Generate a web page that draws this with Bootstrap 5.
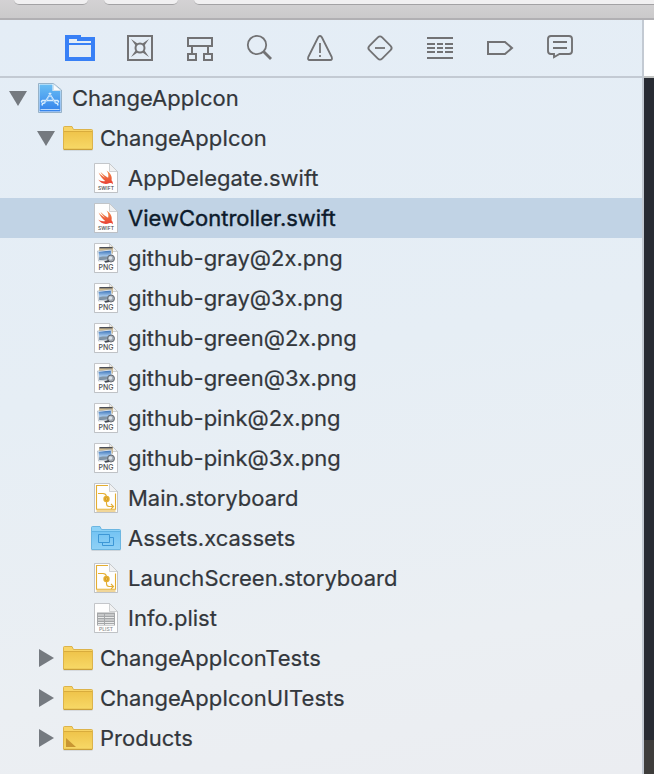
<!DOCTYPE html>
<html lang="en">
<head>
<meta charset="utf-8">
<meta name="viewport" content="width=device-width, initial-scale=1">
<title>ChangeAppIcon</title>
<link rel="stylesheet" href="https://cdn.jsdelivr.net/npm/bootstrap@5.3.0/dist/css/bootstrap.min.css">
<style>
body { font-family: Inter, "Liberation Sans", sans-serif; color: #33373c; }
.titlebar { height: 20px; padding: 0 0 0 14px; gap: 16px; background: linear-gradient(#d4d2d4, #cbcacb); border-bottom: 2px solid #b1b0b3; }
.title-btn { width: 74px; height: 5px; padding: 0; background: #f1f0f1; border: 0; border-bottom: 1px solid #a3a2a4; border-radius: 0 0 8px 8px; }
.title-status { height: 5px; background: #f1f0f1; border-bottom: 1px solid #a3a2a4; border-radius: 0 0 0 8px; }
.navigator { background: linear-gradient(170deg, #e4edf6 0%, #e6eef5 45%, #ebeff3 80%, #ebedf1 100%); border-right: 2px solid #c3cad3; }
.nav-tools { height: 58px; padding-right: 2px; border-bottom: 2px solid #c3cad3; }
.tool { width: 60px; height: 40px; padding: 0; border: 0; background: none; color: #727274; }
.tool.current { color: #3880f6; }
.glyph { width: 30px; height: 30px; display: block; flex: none; }
.outline-row { height: 40px; padding-left: 9px; font-size: 22px; line-height: 28px; white-space: nowrap; }
.level-1 { padding-left: 37px; }
.level-2 { padding-left: 91px; }
.row-name { margin-left: 7px; -webkit-text-stroke: 0.2px currentColor; }
.outline-row.selected { background: #c1d3e5; color: #0d1b2c; }
.selected .row-name { -webkit-text-stroke-width: 0.4px; }
.twist { width: 18px; height: 18px; margin-right: 8px; padding: 0; border: 0; background: none; display: flex; color: #757a80; }
.twist svg { width: 18px; height: 18px; }
.editor { width: 10px; background: #282b33; }
.jumpbar { height: 58px; background: #fff; border-bottom: 2px solid #c2c4c3; }
.debugbar { height: 34px; background: #3e3d3b; }
.kind { font: 500 5px Inter, "Liberation Sans", sans-serif; text-anchor: middle; fill: #4b4d50; }
.kind-png { font-size: 7px; }
.kind-plist { fill: #8a8c8e; }
</style>
<script src="https://cdn.jsdelivr.net/npm/bootstrap@5.3.0/dist/js/bootstrap.bundle.min.js"></script>
</head>
<body>
<svg width="0" height="0" class="position-absolute" aria-hidden="true">
  <defs>
    <linearGradient id="gold" x2="0" y2="1"><stop stop-color="#efc44b"/><stop offset="1" stop-color="#f7d866"/></linearGradient>
    <linearGradient id="sky" x2="0" y2="1"><stop stop-color="#75c4f3"/><stop offset="1" stop-color="#8dd0f6"/></linearGradient>
    <linearGradient id="blue" x2="0" y2="1"><stop stop-color="#69bef4"/><stop offset="1" stop-color="#3483ec"/></linearGradient>
    <linearGradient id="bird" x2="0" y2="1"><stop stop-color="#f29045"/><stop offset="1" stop-color="#e83d35"/></linearGradient>
    <linearGradient id="photo" x2="0" y2="1"><stop stop-color="#3b73b8"/><stop offset=".6" stop-color="#a9cbee"/><stop offset="1" stop-color="#415f83"/></linearGradient>
  </defs>
  <symbol id="page" viewBox="0 0 30 30">
    <path d="M3.500 1h15l8 8v21h-23z" fill="#8b9097" opacity=".45"/>
    <path d="M3.500.5h15l8 8v21h-23z" fill="#fefefe" stroke="#b7babe" stroke-width=".8"/>
    <path d="M18.500.5v8h8z" fill="#f0f1f2" stroke="#bfc1c4" stroke-width=".7"/>
  </symbol>
  <symbol id="swift" viewBox="0 0 30 30">
    <use href="#page"/>
    <path transform="translate(0 -2)" d="M7.500 11.500c2.500 2.500 4.500 4 6.500 5.300-1.800-1.900-3.500-4-4.500-5.800 2.500 2.300 5 4.200 7.600 5.800.7-2.500.3-4.900-1.600-7.300 4 2.400 6 6.200 5 9.800 1.300 1.500 1.700 3 1.200 4-1.100-1.700-2.400-1.500-3.700-1-4.300 1.600-8.500-.2-10.800-3.700 2.200 1.400 4.800 2.200 7 1.300-2.800-2.100-5-5-6.700-8.400z" fill="url(#bird)"/>
  </symbol>
  <symbol id="png" viewBox="0 0 30 30">
    <use href="#page"/>
    <path d="M8 4.500l14-1v7H8z" fill="#d2bd91"/>
    <path d="M8.500 4h13v1.400h-13z" fill="#4a4e58"/>
    <path d="M6.500 8l14-1.500 1 10.500-14 1z" fill="#fff" stroke="#8b98a7" stroke-width=".5"/>
    <path d="M7.500 8.800l12.300-1.200.9 8.500-12.300.8z" fill="url(#photo)"/>
    <path d="M8.300 14.500c4-2 7 0 11-1.500l1 3-12 .7z" fill="#8295a6"/>
    <circle cx="20" cy="15.500" r="3.500" fill="#a2a9b1" stroke="#5b626b" stroke-width=".9"/>
    <circle cx="19.500" cy="15" r="1.800" fill="#dbe3ea"/>
    <path d="M13 18.500l4.500-1.500 1 2-4 .7z" fill="#43484f"/>
  </symbol>
  <symbol id="story" viewBox="0 0 30 30">
    <use href="#page"/>
    <path d="M17 2.500H5.500v23.700h19V10.500M5.500 28h19" fill="none" stroke="#e4ae32" stroke-width="1.100"/>
    <path d="M7 10.500h5q3 0 3.500 3v7q0 3 2.500 3h4.500M20 21l2.500 2.500L20 26" fill="none" stroke="#e4ae32" stroke-width="1.100"/>
    <circle cx="15.500" cy="16" r="3.200" fill="#e4ae32"/><circle cx="15.500" cy="16" r="1.300" fill="#f0c45a" stroke="#c58c14" stroke-width=".6"/>
  </symbol>
  <symbol id="plist" viewBox="0 0 30 30">
    <use href="#page"/>
    <path d="M6 9.500h18v13H6z" fill="#a5a7a9"/>
    <path d="M7 12h6M14 12h9M7 14.500h6M14 14.500h9M7 17h6M14 17h9M7 19.500h6M14 19.500h9M7 21.500h6M14 21.500h9" stroke="#e9eaea" stroke-width="1"/>
  </symbol>
  <symbol id="folder" viewBox="0 0 30 30">
    <path d="M.5 26.500h29v1H.5z" fill="#77777a" opacity=".35"/>
    <path d="M.5 26V4.500q0-1 1-1H9l1.500 3h18q1 0 1 1V26q0 .5-.5.500H1q-.5 0-.5-.5z" fill="#f8d466" stroke="#d9ae3f" stroke-width=".9"/>
    <path d="M1 9h28v16.500H1z" fill="url(#gold)"/><path d="M1 8.500h28" stroke="#d9ac3c"/><path d="M1 26.300h28" stroke="#c69b36"/>
  </symbol>
  <symbol id="assets" viewBox="0 0 30 30">
    <path d="M.5 26.500h29v1H.5z" fill="#66717a" opacity=".4"/>
    <path d="M.5 26V4.500q0-1 1-1H9l1.500 3h18q1 0 1 1V26q0 .5-.5.500H1q-.5 0-.5-.5z" fill="#8ed2f7" stroke="#63b1df" stroke-width=".9"/>
    <path d="M1 9h28v16.500H1z" fill="url(#sky)"/><path d="M1 8.500h28" stroke="#5fb2e3"/>
    <path d="M18.500 14.500h4v8h-11v-3M7.500 11.500h11v8h-11z" fill="none" stroke="#3d97d6"/>
  </symbol>
  <symbol id="project" viewBox="0 0 30 30">
    <path d="M3.500.5h15L26.500 7v22.500h-23z" fill="#f4f8fb" stroke="#8caac3" stroke-width=".9"/>
    <path d="M4.500 1.500h13V8h8v20.500h-21z" fill="url(#blue)"/>
    <path d="M5.500 26.500h19" fill="none" stroke="#dceefe" stroke-width=".8"/>
    <path d="M18.500 1l7.500 6.500h-7.500z" fill="#f8fafc" stroke="#a9c6dd" stroke-width=".5"/>
    <path d="M14 10l6.500 10 2 .5.500 2M16 10L9.500 20l-2 .5-.5 2M7 17.500h16M7 17.500q-1 1 0 2M23 17.500q1 1 0 2" fill="none" stroke="#d8edff" stroke-width="1.500"/>
    <path d="M14.500 11.500l6 9M15.500 11.500l-6 9" stroke="#62a8ef" stroke-width=".5"/>
  </symbol>
  <symbol id="down" viewBox="0 0 18 18"><path d="M0 2h18L9 17z" fill="currentColor"/></symbol>
  <symbol id="right" viewBox="0 0 18 18"><path d="M2 0l15 9-15 9z" fill="currentColor"/></symbol>
</svg>

<div class="d-flex flex-column vh-100 overflow-hidden">
  <header class="titlebar d-flex flex-shrink-0">
    <button class="title-btn" type="button" aria-label="Run"></button>
    <button class="title-btn" type="button" aria-label="Stop"></button>
    <div class="title-status flex-fill"></div>
  </header>
  <div class="d-flex flex-fill">
    <aside class="navigator flex-fill">
      <nav class="nav-tools d-flex align-items-center justify-content-center" aria-label="Navigators">
        <button class="tool current d-flex align-items-center justify-content-center" type="button" aria-label="Project"><svg class="glyph" viewBox="0 0 30 30"><path fill="currentColor" fill-rule="evenodd" d="M0 2h16v2h14v24H0zM4 6v2h8V6zM4 8v2h22V8zM4 12v12h22V12z"/></svg></button>
        <button class="tool d-flex align-items-center justify-content-center" type="button" aria-label="Source control"><svg class="glyph" viewBox="0 0 30 30" fill="none" stroke="currentColor" stroke-width="2"><path d="M3 3h24v24H3z"/><circle cx="15" cy="15" r="4.500"/><path fill="currentColor" stroke="none" d="M6 6l6.500 4.500-2 2zM24 6l-6.500 4.500 2 2zM6 24l6.500-4.500-2-2zM24 24l-6.500-4.500 2-2z"/></svg></button>
        <button class="tool d-flex align-items-center justify-content-center" type="button" aria-label="Symbols"><svg class="glyph" viewBox="0 0 30 30" fill="none" stroke="currentColor" stroke-width="2"><path d="M3 5h24v8H3zM7 13v8M23 13v8M3 21h8v6H3zM19 21h8v6h-8z"/></svg></button>
        <button class="tool d-flex align-items-center justify-content-center" type="button" aria-label="Find"><svg class="glyph" viewBox="0 0 30 30" fill="none" stroke="currentColor"><circle cx="12" cy="12" r="9.200" stroke-width="1.800"/><path stroke-width="2.800" d="M18.500 18.500l7.500 7.500"/></svg></button>
        <button class="tool d-flex align-items-center justify-content-center" type="button" aria-label="Issues"><svg class="glyph" viewBox="0 0 30 30" fill="none" stroke="currentColor" stroke-width="1.800"><path stroke-linejoin="round" d="M13.300 4q1.700-2 3.400 0l10 20q1 3-1.500 3H4.800q-2.500 0-1.500-3z"/><path d="M15 10v10M15 22v2"/></svg></button>
        <button class="tool d-flex align-items-center justify-content-center" type="button" aria-label="Tests"><svg class="glyph" viewBox="0 0 30 30" fill="none" stroke="currentColor" stroke-width="1.800"><rect x="6" y="6" width="18" height="18" rx="3" transform="rotate(45 15 15)"/><path d="M10 15h10"/></svg></button>
        <button class="tool d-flex align-items-center justify-content-center" type="button" aria-label="Debug"><svg class="glyph" viewBox="0 0 30 30" fill="none" stroke="currentColor" stroke-width="2"><path d="M2 5h26M2 25h26M2 11h8m2 0h6m2 0h8M2 15h8m2 0h6m2 0h8M2 19h8m2 0h6m2 0h8"/></svg></button>
        <button class="tool d-flex align-items-center justify-content-center" type="button" aria-label="Breakpoints"><svg class="glyph" viewBox="0 0 30 30" fill="none" stroke="currentColor" stroke-width="2"><path d="M3 9h17l7 6-7 6H3z"/></svg></button>
        <button class="tool d-flex align-items-center justify-content-center" type="button" aria-label="Reports"><svg class="glyph" viewBox="0 0 30 30" fill="none" stroke="currentColor" stroke-width="1.900"><path d="M6 3h18q3 0 3 3v12q0 3-3 3H14.500L9 24.200V21H6q-3 0-3-3V6q0-3 3-3zM8 9h14M8 15h14"/></svg></button>
      </nav>
      <ul class="list-unstyled mb-0">
        <li class="outline-row d-flex align-items-center"><button class="twist" type="button" aria-label="Collapse"><svg><use href="#down"/></svg></button><svg class="glyph"><use href="#project"/></svg><span class="row-name">ChangeAppIcon</span></li>
        <li class="outline-row level-1 d-flex align-items-center"><button class="twist" type="button" aria-label="Collapse"><svg><use href="#down"/></svg></button><svg class="glyph"><use href="#folder"/></svg><span class="row-name">ChangeAppIcon</span></li>
        <li class="outline-row level-2 d-flex align-items-center"><svg class="glyph"><use href="#swift"/><text class="kind" x="15" y="27">SWIFT</text></svg><span class="row-name">AppDelegate.swift</span></li>
        <li class="outline-row level-2 selected d-flex align-items-center"><svg class="glyph"><use href="#swift"/><text class="kind" x="15" y="27">SWIFT</text></svg><span class="row-name">ViewController.swift</span></li>
        <li class="outline-row level-2 d-flex align-items-center"><svg class="glyph"><use href="#png"/><text class="kind kind-png" x="15" y="27">PNG</text></svg><span class="row-name">github-gray@2x.png</span></li>
        <li class="outline-row level-2 d-flex align-items-center"><svg class="glyph"><use href="#png"/><text class="kind kind-png" x="15" y="27">PNG</text></svg><span class="row-name">github-gray@3x.png</span></li>
        <li class="outline-row level-2 d-flex align-items-center"><svg class="glyph"><use href="#png"/><text class="kind kind-png" x="15" y="27">PNG</text></svg><span class="row-name">github-green@2x.png</span></li>
        <li class="outline-row level-2 d-flex align-items-center"><svg class="glyph"><use href="#png"/><text class="kind kind-png" x="15" y="27">PNG</text></svg><span class="row-name">github-green@3x.png</span></li>
        <li class="outline-row level-2 d-flex align-items-center"><svg class="glyph"><use href="#png"/><text class="kind kind-png" x="15" y="27">PNG</text></svg><span class="row-name">github-pink@2x.png</span></li>
        <li class="outline-row level-2 d-flex align-items-center"><svg class="glyph"><use href="#png"/><text class="kind kind-png" x="15" y="27">PNG</text></svg><span class="row-name">github-pink@3x.png</span></li>
        <li class="outline-row level-2 d-flex align-items-center"><svg class="glyph"><use href="#story"/></svg><span class="row-name">Main.storyboard</span></li>
        <li class="outline-row level-2 d-flex align-items-center"><svg class="glyph"><use href="#assets"/></svg><span class="row-name">Assets.xcassets</span></li>
        <li class="outline-row level-2 d-flex align-items-center"><svg class="glyph"><use href="#story"/></svg><span class="row-name">LaunchScreen.storyboard</span></li>
        <li class="outline-row level-2 d-flex align-items-center"><svg class="glyph"><use href="#plist"/><text class="kind kind-plist" x="15" y="28">PLIST</text></svg><span class="row-name">Info.plist</span></li>
        <li class="outline-row level-1 d-flex align-items-center"><button class="twist" type="button" aria-label="Expand"><svg><use href="#right"/></svg></button><svg class="glyph"><use href="#folder"/></svg><span class="row-name">ChangeAppIconTests</span></li>
        <li class="outline-row level-1 d-flex align-items-center"><button class="twist" type="button" aria-label="Expand"><svg><use href="#right"/></svg></button><svg class="glyph"><use href="#folder"/></svg><span class="row-name">ChangeAppIconUITests</span></li>
        <li class="outline-row level-1 d-flex align-items-center"><button class="twist" type="button" aria-label="Expand"><svg><use href="#right"/></svg></button><svg class="glyph" viewBox="0 0 30 30"><use href="#folder"/><path d="M3 15v9h10z" fill="#c99632"/></svg><span class="row-name">Products</span></li>
      </ul>
    </aside>
    <section class="editor d-flex flex-column flex-shrink-0" aria-label="Editor">
      <div class="jumpbar"></div>
      <div class="flex-fill"></div>
      <div class="debugbar"></div>
    </section>
  </div>
</div>
</body>
</html>
